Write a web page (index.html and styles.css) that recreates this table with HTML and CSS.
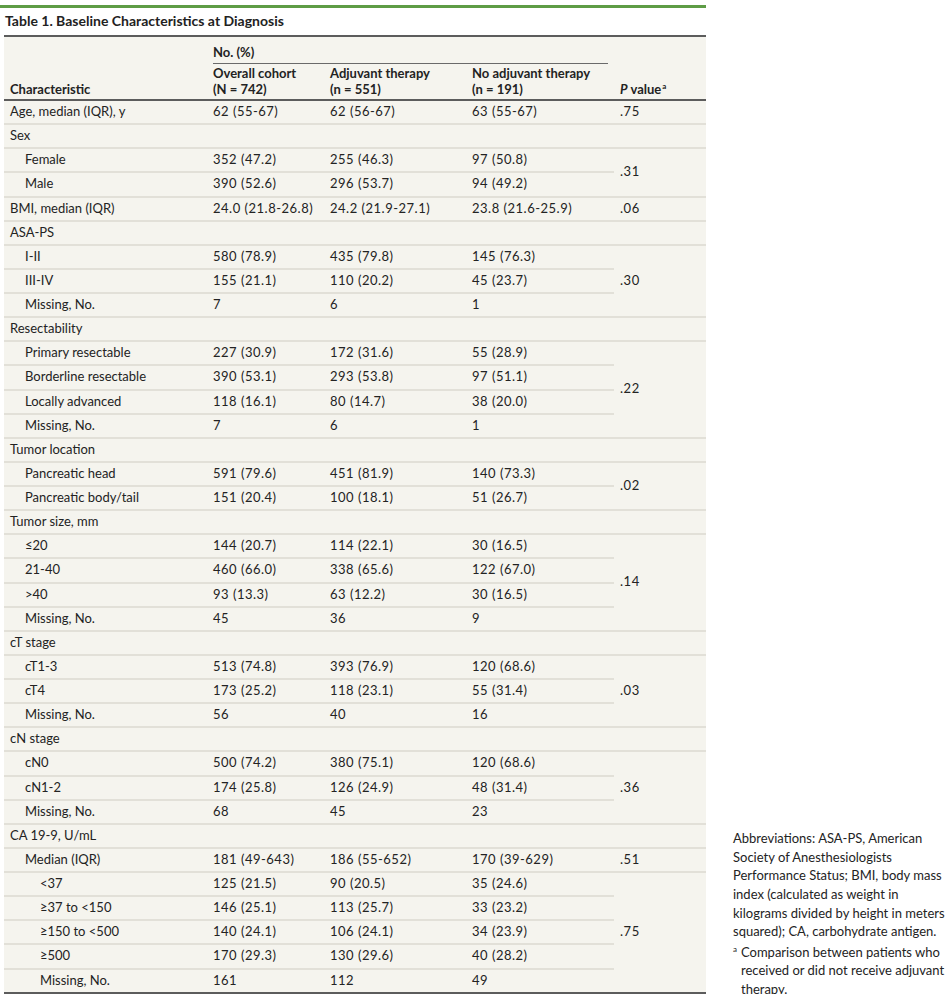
FILE: index.html
```html
<!DOCTYPE html>
<html lang="en">
<head>
<meta charset="utf-8">
<title>Table 1. Baseline Characteristics at Diagnosis</title>
<link rel="stylesheet" href="styles.css">
</head>
<body>
<div class="page">
  <div class="main">
    <div class="rule"></div>
    <h1 class="title">Table 1. Baseline Characteristics at Diagnosis</h1>
    <table class="data">
      <colgroup>
        <col class="c1"><col class="c2"><col class="c3"><col class="c4"><col class="c5">
      </colgroup>
      <thead>
        <tr>
          <th rowspan="2" class="hb">Characteristic</th>
          <th colspan="3" class="group"><div class="group-label">No. (%)</div></th>
          <th rowspan="2" class="hb"><i>P</i> value<sup>a</sup></th>
        </tr>
        <tr>
          <th class="hb">Overall cohort<br>(N = 742)</th>
          <th class="hb">Adjuvant therapy<br>(n = 551)</th>
          <th class="hb">No adjuvant therapy<br>(n = 191)</th>
        </tr>
      </thead>
      <tbody>
        <tr><td>Age, median (IQR), y</td><td>62 (55-67)</td><td>62 (56-67)</td><td>63 (55-67)</td><td>.75</td></tr>
        <tr><td>Sex</td><td></td><td></td><td></td><td></td></tr>
        <tr><td class="l1">Female</td><td>352 (47.2)</td><td>255 (46.3)</td><td>97 (50.8)</td><td rowspan="2" class="pv">.31</td></tr>
        <tr><td class="l1">Male</td><td>390 (52.6)</td><td>296 (53.7)</td><td>94 (49.2)</td></tr>
        <tr><td>BMI, median (IQR)</td><td>24.0 (21.8-26.8)</td><td>24.2 (21.9-27.1)</td><td>23.8 (21.6-25.9)</td><td>.06</td></tr>
        <tr><td>ASA-PS</td><td></td><td></td><td></td><td></td></tr>
        <tr><td class="l1">I-II</td><td>580 (78.9)</td><td>435 (79.8)</td><td>145 (76.3)</td><td rowspan="3" class="pv">.30</td></tr>
        <tr><td class="l1">III-IV</td><td>155 (21.1)</td><td>110 (20.2)</td><td>45 (23.7)</td></tr>
        <tr><td class="l1">Missing, No.</td><td>7</td><td>6</td><td>1</td></tr>
        <tr><td>Resectability</td><td></td><td></td><td></td><td></td></tr>
        <tr><td class="l1">Primary resectable</td><td>227 (30.9)</td><td>172 (31.6)</td><td>55 (28.9)</td><td rowspan="4" class="pv">.22</td></tr>
        <tr><td class="l1">Borderline resectable</td><td>390 (53.1)</td><td>293 (53.8)</td><td>97 (51.1)</td></tr>
        <tr><td class="l1">Locally advanced</td><td>118 (16.1)</td><td>80 (14.7)</td><td>38 (20.0)</td></tr>
        <tr><td class="l1">Missing, No.</td><td>7</td><td>6</td><td>1</td></tr>
        <tr><td>Tumor location</td><td></td><td></td><td></td><td></td></tr>
        <tr><td class="l1">Pancreatic head</td><td>591 (79.6)</td><td>451 (81.9)</td><td>140 (73.3)</td><td rowspan="2" class="pv">.02</td></tr>
        <tr><td class="l1">Pancreatic body/tail</td><td>151 (20.4)</td><td>100 (18.1)</td><td>51 (26.7)</td></tr>
        <tr><td>Tumor size, mm</td><td></td><td></td><td></td><td></td></tr>
        <tr><td class="l1">≤20</td><td>144 (20.7)</td><td>114 (22.1)</td><td>30 (16.5)</td><td rowspan="4" class="pv">.14</td></tr>
        <tr><td class="l1">21-40</td><td>460 (66.0)</td><td>338 (65.6)</td><td>122 (67.0)</td></tr>
        <tr><td class="l1">&gt;40</td><td>93 (13.3)</td><td>63 (12.2)</td><td>30 (16.5)</td></tr>
        <tr><td class="l1">Missing, No.</td><td>45</td><td>36</td><td>9</td></tr>
        <tr><td>cT stage</td><td></td><td></td><td></td><td></td></tr>
        <tr><td class="l1">cT1-3</td><td>513 (74.8)</td><td>393 (76.9)</td><td>120 (68.6)</td><td rowspan="3" class="pv">.03</td></tr>
        <tr><td class="l1">cT4</td><td>173 (25.2)</td><td>118 (23.1)</td><td>55 (31.4)</td></tr>
        <tr><td class="l1">Missing, No.</td><td>56</td><td>40</td><td>16</td></tr>
        <tr><td>cN stage</td><td></td><td></td><td></td><td></td></tr>
        <tr><td class="l1">cN0</td><td>500 (74.2)</td><td>380 (75.1)</td><td>120 (68.6)</td><td rowspan="3" class="pv">.36</td></tr>
        <tr><td class="l1">cN1-2</td><td>174 (25.8)</td><td>126 (24.9)</td><td>48 (31.4)</td></tr>
        <tr><td class="l1">Missing, No.</td><td>68</td><td>45</td><td>23</td></tr>
        <tr><td>CA 19-9, U/mL</td><td></td><td></td><td></td><td></td></tr>
        <tr><td class="l1">Median (IQR)</td><td>181 (49-643)</td><td>186 (55-652)</td><td>170 (39-629)</td><td>.51</td></tr>
        <tr><td class="l2">&lt;37</td><td>125 (21.5)</td><td>90 (20.5)</td><td>35 (24.6)</td><td rowspan="5" class="pv end">.75</td></tr>
        <tr><td class="l2">≥37 to &lt;150</td><td>146 (25.1)</td><td>113 (25.7)</td><td>33 (23.2)</td></tr>
        <tr><td class="l2">≥150 to &lt;500</td><td>140 (24.1)</td><td>106 (24.1)</td><td>34 (23.9)</td></tr>
        <tr><td class="l2">≥500</td><td>170 (29.3)</td><td>130 (29.6)</td><td>40 (28.2)</td></tr>
        <tr><td class="l2">Missing, No.</td><td>161</td><td>112</td><td>49</td></tr>
      </tbody>
    </table>
  </div>
  <aside class="notes">
    <p class="note">Abbreviations: ASA-PS, American Society of Anesthesiologists Performance Status; BMI, body mass index (calculated as weight in kilograms divided by height in meters squared); CA, carbohydrate antigen.</p>
    <p class="note fn"><span class="mark">a</span>Comparison between patients who received or did not receive adjuvant therapy.</p>
  </aside>
</div>
</body>
</html>
```

FILE: styles.css
```css
* { box-sizing: border-box; }

html, body {
  margin: 0;
  padding: 0;
  background: #ffffff;
}

body {
  font-family: Lato, "Open Sans", "DejaVu Sans", sans-serif;
  color: #232323;
  font-size: 13px;
}

.page {
  display: flex;
  align-items: flex-start;
  padding-top: 5px;
}

.main {
  width: 706px;
  flex: none;
}

.rule {
  height: 2.5px;
  background: #5e9c45;
}

.title {
  margin: 4px 0 5px 5px;
  font-size: 14px;
  line-height: 18px;
  font-weight: 700;
  letter-spacing: 0;
  color: #222;
}

.data {
  margin-left: 4px;
  width: 702px;
  table-layout: fixed;
  border-collapse: separate;
  border-spacing: 0;
  background: #f5f4ee;
  border-top: 2px solid #5c5c5c;
  border-bottom: 2px solid #5c5c5c;
}

.c1 { width: 203px; }
.c2 { width: 117px; }
.c3 { width: 142px; }
.c4 { width: 148px; }
.c5 { width: 92px; }

.data th {
  text-align: left;
  font-weight: 700;
  font-size: 13px;
  line-height: 15.5px;
  padding: 2.5px 6px 2px;
  vertical-align: bottom;
}

.data th.hb {
  border-bottom: 2px solid #5c5c5c;
}

.data th.group {
  padding: 7px 6px 0;
}

.group-label {
  padding-bottom: 3px;
  border-bottom: 1.5px solid #6a6a6a;
  line-height: 16px;
}

.data sup {
  font-size: 8px;
  line-height: 0;
  vertical-align: 5px;
  margin-left: 1px;
}

.data td {
  padding: 2px 6px 4.135px;
  line-height: 16px;
  border-bottom: 2px solid #e2e0d8;
  vertical-align: middle;
  white-space: nowrap;
}

.data td + td {
  letter-spacing: 0.5px;
}

.data tbody tr:last-child td,
.data td.end {
  border-bottom: 0;
}

.data td.l1 { padding-left: 21px; }
.data td.l2 { padding-left: 36px; }

.notes {
  align-self: flex-end;
  margin-left: 27px;
  margin-bottom: -5px;
  width: 220px;
}

.note {
  margin: 0;
  font-size: 13px;
  line-height: 18.7px;
}

.note.fn {
  margin-top: 1.4px;
  padding-left: 8px;
}

.mark {
  display: inline-block;
  width: 8px;
  margin-left: -8px;
  font-size: 8px;
  line-height: 0;
  vertical-align: 5px;
}
```
